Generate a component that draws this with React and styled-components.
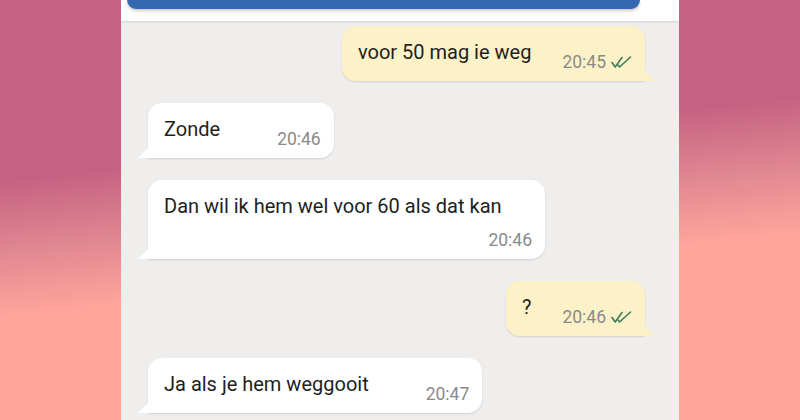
import React from 'react'
import styled, { createGlobalStyle } from 'styled-components'

const GlobalStyle = createGlobalStyle`
	html, body {
		margin: 0;
		padding: 0;
	}
	body {
		font-family: Roboto, 'Noto Sans', sans-serif;
	}
`

const messages = [
	{ text: 'voor 50 mag ie weg', time: '20:45', out: true },
	{ text: 'Zonde', time: '20:46' },
	{ text: 'Dan wil ik hem wel voor 60 als dat kan', time: '20:46' },
	{ text: '?', time: '20:46', out: true },
	{ text: 'Ja als je hem weggooit', time: '20:47' },
]

const Ticks = () => (
	<svg width='21' height='12' viewBox='0 0 21 12' fill='none' stroke='#3d7b5b' strokeWidth='1.6' strokeLinecap='round' strokeLinejoin='round'>
		<path d='M1 6.5 L4.2 11 L11 1.5' />
		<path d='M7 9 L8.6 11 L19.5 1' />
	</svg>
)

const App = () => {
	return (
		<Page>
			<GlobalStyle />
			<Phone>
				<Header>
					<ActionBar />
				</Header>
				<Conversation>
					{messages.map((m, i) => (
						<Row key={i} $out={m.out}>
							<Bubble $out={m.out}>
								<Text>{m.text}</Text>
								<Meta $out={m.out}>
									<Time>{m.time}</Time>
									{m.out && <Ticks />}
								</Meta>
							</Bubble>
						</Row>
					))}
				</Conversation>
			</Phone>
		</Page>
	)
}

export default App

const Page = styled.div`
	width: 800px;
	height: 420px;
	overflow: hidden;
	display: flex;
	justify-content: center;
	background: linear-gradient(174deg, #c56283 0%, #c56283 36%, #df8590 49%, #ffa59c 63%, #ffa59c 100%);
`

const Phone = styled.div`
	width: 558px;
	height: 420px;
	background: #efeeec;
	display: flex;
	flex-direction: column;
	overflow: hidden;
`

const Header = styled.div`
	height: 21px;
	flex-shrink: 0;
	background: #fff;
	padding: 0 39px 0 6px;
	box-shadow: 0 1px 2px rgba(0, 0, 0, 0.12);
	position: relative;
	z-index: 1;
`

const ActionBar = styled.div`
	height: 9px;
	background: #3467b0;
	border-radius: 0 0 9px 9px;
	box-shadow: 0 2px 3px rgba(0, 0, 0, 0.2);
`

const Conversation = styled.div`
	display: flex;
	flex-direction: column;
	gap: 22px;
	padding: 5px 34px 0 27px;
`

const Row = styled.div`
	display: flex;
	justify-content: ${p => (p.$out ? 'flex-end' : 'flex-start')};
`

const Bubble = styled.div`
	position: relative;
	max-width: 397px;
	box-sizing: border-box;
	display: flex;
	flex-wrap: wrap;
	padding: 14px 13px 9px 16px;
	background: ${p => (p.$out ? '#fdf2c7' : '#ffffff')};
	border-radius: ${p => (p.$out ? '14px 14px 0 14px' : '14px 14px 14px 0')};
	box-shadow: 0 1px 2px rgba(0, 0, 0, 0.13);

	&::after {
		content: '';
		position: absolute;
		bottom: 0;
		${p => (p.$out ? 'right: -10px;' : 'left: -10px;')}
		width: 0;
		height: 0;
		border-bottom: 10px solid ${p => (p.$out ? '#fdf2c7' : '#ffffff')};
		${p => (p.$out ? 'border-right: 10px solid transparent;' : 'border-left: 10px solid transparent;')}
	}
`

const Text = styled.span`
	align-self: flex-start;
	font-size: 20px;
	line-height: 24px;
	color: #1e1e1e;
`

const Meta = styled.span`
	margin-left: ${p => (p.$out ? '31px' : 'auto')};
	padding-left: ${p => (p.$out ? '0' : '57px')};
	margin-top: 12px;
	display: flex;
	align-items: center;
	gap: 5px;
	height: 20px;
`

const Time = styled.span`
	font-size: 17.5px;
	line-height: 20px;
	color: #8a8a8a;
`
